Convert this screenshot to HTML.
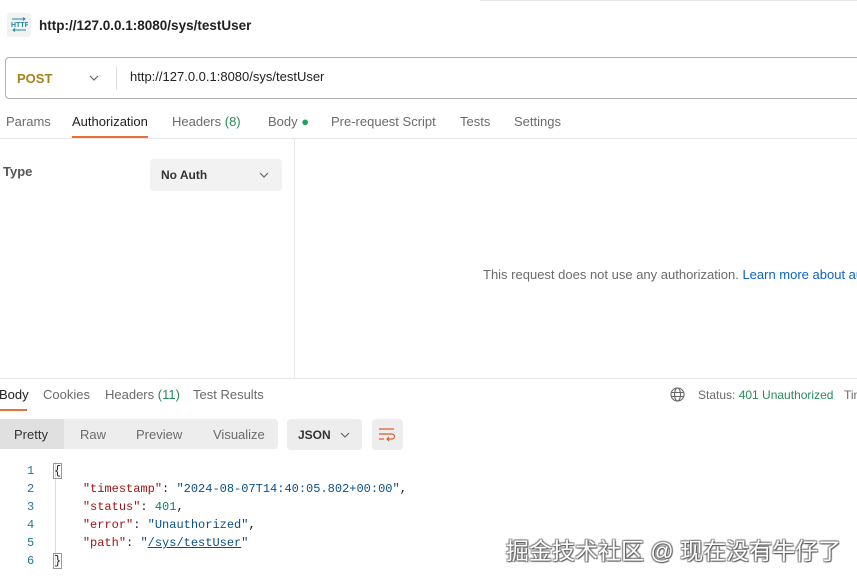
<!DOCTYPE html>
<html><head><meta charset="utf-8"><style>
body{margin:0;width:857px;height:578px;overflow:hidden;background:#fff;font-family:"Liberation Sans",Arial,sans-serif;font-size:13px;color:#212121;position:relative}
.a{position:absolute;white-space:nowrap}
.g{color:#6b6b6b}
.mono{font-family:"Liberation Mono",monospace;font-size:12px}
.k{color:#a31515}.s{color:#0b4f8a}.n{color:#098658}
</style></head><body>
<div class="a" style="left:480px;top:0;width:377px;height:1px;background:#e6e6e6"></div>
<div class="a" style="left:7px;top:13px;width:24px;height:24px;background:#f2f2f2;border-radius:3px"></div>
<svg class="a" style="left:10px;top:17px" width="18" height="16" viewBox="0 0 18 16"><text x="1" y="10" font-size="7" fill="#1f8a9e" font-family="Liberation Sans" font-weight="bold">HTTP</text><path d="M2 2h13M13 0.5l2 1.5-2 1.5M16 13H3M5 11.5l-2 1.5 2 1.5" stroke="#1f8a9e" fill="none" stroke-width="1"/></svg>
<div class="a" style="left:39px;top:18px;font-weight:bold;font-size:13.5px">http://127.0.0.1:8080/sys/testUser</div>
<div class="a" style="left:5px;top:57px;width:852px;height:40px;border:1px solid #b0b0b0;border-right:none;border-radius:4px 0 0 4px"></div>
<div class="a" style="left:17px;top:71px;font-weight:bold;color:#a8801c">POST</div>
<svg class="a" style="left:89px;top:74px" width="10" height="8"><path d="M1 2l4 4 4-4" stroke="#666" fill="none" stroke-width="1.2"/></svg>
<div class="a" style="left:116px;top:66px;width:1px;height:24px;background:#e0e0e0"></div>
<div class="a" style="left:130px;top:69px">http://127.0.0.1:8080/sys/testUser</div>
<div class="a g" style="left:6px;top:114px">Params</div>
<div class="a" style="left:72px;top:114px">Authorization</div>
<div class="a g" style="left:172px;top:114px">Headers <span style="color:#2a8a5a">(8)</span></div>
<div class="a g" style="left:268px;top:114px">Body <span style="color:#1ea35a">●</span></div>
<div class="a g" style="left:331px;top:114px">Pre-request Script</div>
<div class="a g" style="left:460px;top:114px">Tests</div>
<div class="a g" style="left:514px;top:114px">Settings</div>
<div class="a" style="left:0;top:138px;width:857px;height:1px;background:#e6e6e6"></div>
<div class="a" style="left:72px;top:136px;width:76px;height:2px;background:#e8703a"></div>
<div class="a" style="left:3px;top:164px;font-weight:bold;color:#555">Type</div>
<div class="a" style="left:150px;top:159px;width:132px;height:32px;background:#f2f2f2;border-radius:3px"></div>
<div class="a" style="left:161px;top:168px;font-weight:bold;font-size:12px;color:#333">No Auth</div>
<svg class="a" style="left:259px;top:171px" width="10" height="8"><path d="M1 2l4 4 4-4" stroke="#666" fill="none" stroke-width="1.2"/></svg>
<div class="a" style="left:294px;top:139px;width:1px;height:239px;background:#e6e6e6"></div>
<div class="a g" style="left:483px;top:267px;width:374px;overflow:hidden">This request does not use any authorization. <span style="color:#0b64c0">Learn more about authorization</span></div>
<div class="a" style="left:0;top:378px;width:857px;height:1px;background:#e6e6e6"></div>
<div class="a" style="left:-1px;top:387px">Body</div>
<div class="a" style="left:0;top:409px;width:27px;height:2px;background:#e8703a"></div>
<div class="a g" style="left:43px;top:387px">Cookies</div>
<div class="a g" style="left:105px;top:387px">Headers <span style="color:#2a8a5a">(11)</span></div>
<div class="a g" style="left:193px;top:387px">Test Results</div>
<svg class="a" style="left:670px;top:387px" width="15" height="15" viewBox="0 0 15 15" fill="none" stroke="#666" stroke-width="1.1"><circle cx="7.5" cy="7.5" r="6.5"/><ellipse cx="7.5" cy="7.5" rx="3" ry="6.5"/><path d="M1 5.5h13M1 9.5h13"/></svg>
<div class="a g" style="left:698px;top:388px;font-size:12px">Status: <span style="color:#2a8a5a">401 Unauthorized</span></div>
<div class="a g" style="left:844px;top:388px;font-size:12px;width:13px;overflow:hidden">Time</div>
<div class="a" style="left:0;top:419px;width:278px;height:30px;background:#ededed;border-radius:0 4px 4px 0"></div>
<div class="a" style="left:0;top:419px;width:64px;height:30px;background:#e0e0e0"></div>
<div class="a" style="left:14px;top:427px;color:#333">Pretty</div>
<div class="a g" style="left:80px;top:427px">Raw</div>
<div class="a g" style="left:136px;top:427px">Preview</div>
<div class="a g" style="left:213px;top:427px">Visualize</div>
<div class="a" style="left:287px;top:419px;width:75px;height:31px;background:#ededed;border-radius:4px"></div>
<div class="a" style="left:298px;top:428px;font-weight:bold;font-size:12px;color:#333">JSON</div>
<svg class="a" style="left:340px;top:431px" width="10" height="8"><path d="M1 2l4 4 4-4" stroke="#666" fill="none" stroke-width="1.2"/></svg>
<div class="a" style="left:372px;top:419px;width:31px;height:31px;background:#ededed;border-radius:4px"></div>
<svg class="a" style="left:378px;top:427px" width="18" height="15" viewBox="0 0 18 15" fill="none" stroke="#e0602a" stroke-width="1.2"><path d="M1 2h15M1 7h13a2.5 2.5 0 010 5H9M11 10l-2 2 2 2M1 12h5"/></svg>
<div class="a" style="left:55px;top:462px;width:5px;height:104px;border-left:1px solid #ddd"></div>
<div class="a mono" style="left:27px;top:462px;line-height:18px;color:#237893">1<br>2<br>3<br>4<br>5<br>6</div>
<div class="a mono" style="left:54px;top:462px;line-height:18px">
<span style="outline:1px solid #999">{</span><br>
&nbsp;&nbsp;&nbsp;&nbsp;<span class="k">"timestamp"</span>: <span class="s">"2024-08-07T14:40:05.802+00:00"</span>,<br>
&nbsp;&nbsp;&nbsp;&nbsp;<span class="k">"status"</span>: <span class="n">401</span>,<br>
&nbsp;&nbsp;&nbsp;&nbsp;<span class="k">"error"</span>: <span class="s">"Unauthorized"</span>,<br>
&nbsp;&nbsp;&nbsp;&nbsp;<span class="k">"path"</span>: <span class="s">"<u>/sys/testUser</u>"</span><br>
<span style="outline:1px solid #999">}</span></div>
<div class="a" style="left:506px;top:532px;font-size:23px;font-family:'Liberation Sans','Noto Sans CJK SC',sans-serif;color:#fff;text-shadow:1px 1px 1px #555,-1px -1px 1px #888,1px -1px 1px #888,-1px 1px 1px #888">掘金技术社区 @ 现在没有牛仔了</div>
</body></html>
